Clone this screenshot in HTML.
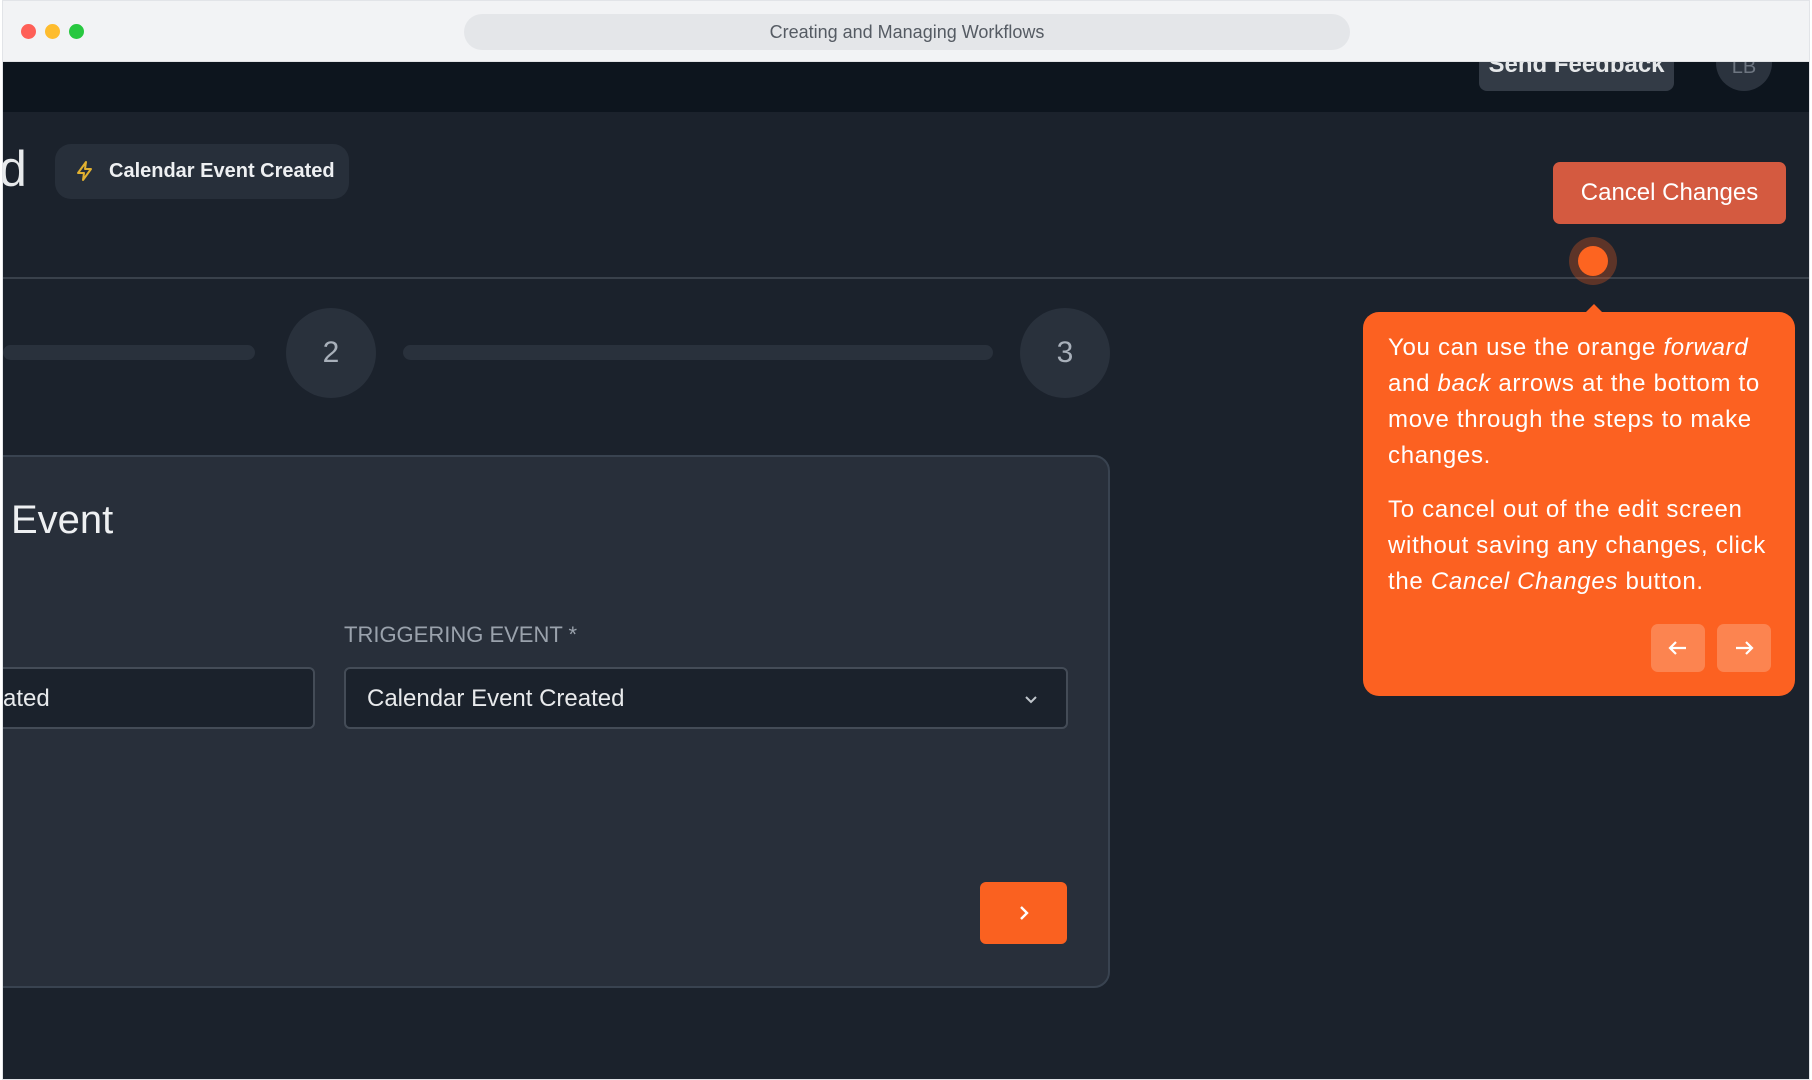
<!DOCTYPE html>
<html><head><meta charset="utf-8"><style>
*{margin:0;padding:0;box-sizing:border-box}
html,body{width:1812px;height:1080px;overflow:hidden;background:#fff;font-family:"Liberation Sans",sans-serif}
.win{position:absolute;left:2px;top:0;width:1808px;height:1080px;background:#1b222c;overflow:hidden;border:1px solid #e2e4e8}
.tb{position:absolute;left:0;top:0;width:100%;height:61px;background:#f2f3f5;border-bottom:1px solid #e0e2e5}
.dot{position:absolute;top:23px;width:15px;height:15px;border-radius:50%}
.url{position:absolute;left:461px;top:13px;width:886px;height:36px;border-radius:18px;background:#e4e6e9;text-align:center;line-height:36px;font-size:18px;color:#555b63}
.hdr{position:absolute;left:0;top:61px;width:100%;height:50px;background:#0d151e;overflow:hidden}
.sf{position:absolute;left:1476px;top:-30px;width:195px;height:59px;background:#333b46;border-radius:8px;color:#e6e8ea;font-weight:bold;font-size:24px;text-align:center;line-height:65px}
.av{position:absolute;left:1713px;top:-27px;width:56px;height:56px;border-radius:50%;background:#2b333e;color:#6d7580;text-align:center;line-height:64px;font-size:20px}
.abs{position:absolute}
</style></head><body>
<div class="win">
<div class="tb">
<div class="dot" style="left:18px;background:#fe5f57"></div>
<div class="dot" style="left:42px;background:#febc2e"></div>
<div class="dot" style="left:66px;background:#28c840"></div>
<div class="url">Creating and Managing Workflows</div>
</div>
<div class="hdr"><div class="sf">Send Feedback</div><div class="av">LB</div></div>

<div class="abs" style="left:-4px;top:138px;font-size:50px;color:#e8eaec;line-height:60px">d</div>
<div class="abs" style="left:52px;top:143px;width:294px;height:55px;border-radius:16px;background:#272f3a"></div>
<svg class="abs" style="left:70px;top:158px" width="24" height="24" viewBox="0 0 24 24" fill="none" stroke="#e0b030" stroke-width="2" stroke-linejoin="round"><path d="M13 3L5 14h6l-1 7 8-11h-6z"/></svg>
<div class="abs" style="left:106px;top:156px;font-size:20px;font-weight:bold;color:#eef0f2;line-height:28px">Calendar Event Created</div>

<div class="abs" style="left:1550px;top:161px;width:233px;height:62px;border-radius:7px;background:#d45a40;color:#fff;font-size:24px;text-align:center;line-height:62px">Cancel Changes</div>

<div class="abs" style="left:0;top:276px;width:100%;height:2px;background:#39414b"></div>

<div class="abs" style="left:0;top:344px;width:252px;height:15px;border-radius:8px;background:#29313c"></div>
<div class="abs" style="left:283px;top:307px;width:90px;height:90px;border-radius:50%;background:#29313c;color:#a8b0ba;font-size:30px;text-align:center;line-height:90px">2</div>
<div class="abs" style="left:400px;top:344px;width:590px;height:15px;border-radius:8px;background:#29313c"></div>
<div class="abs" style="left:1017px;top:307px;width:90px;height:90px;border-radius:50%;background:#29313c;color:#a8b0ba;font-size:30px;text-align:center;line-height:90px">3</div>

<div class="abs" style="left:-30px;top:454px;width:1137px;height:533px;border-radius:16px;background:#282f3a;border:2px solid #394350"></div>
<div class="abs" style="left:8px;top:494px;font-size:40px;color:#eef0f2;line-height:50px">Event</div>
<div class="abs" style="left:341px;top:620px;font-size:22px;color:#9aa2ac;line-height:28px">TRIGGERING EVENT *</div>
<div class="abs" style="left:-20px;top:666px;width:332px;height:62px;border-radius:6px;background:#1b222c;border:2px solid #444c57"></div>
<div class="abs" style="left:0;top:683px;font-size:24px;color:#e8eaec;line-height:30px">ated</div>
<div class="abs" style="left:341px;top:666px;width:724px;height:62px;border-radius:6px;background:#1b222c;border:2px solid #444c57"></div>
<div class="abs" style="left:364px;top:683px;font-size:24px;color:#e8eaec;line-height:30px">Calendar Event Created</div>
<svg class="abs" style="left:1018px;top:688px" width="20" height="20" viewBox="0 0 20 20" fill="none" stroke="#c0c6cc" stroke-width="2"><path d="M5 8l5 5 5-5"/></svg>
<div class="abs" style="left:977px;top:881px;width:87px;height:62px;border-radius:6px;background:#fa6120"></div>
<svg class="abs" style="left:1010px;top:901px" width="22" height="22" viewBox="0 0 22 22" fill="none" stroke="#fff" stroke-width="2.4"><path d="M8 5l6 6-6 6"/></svg>

<div class="abs" style="left:1566px;top:236px;width:48px;height:48px;border-radius:50%;background:rgba(250,97,32,0.3)"></div>
<div class="abs" style="left:1575px;top:245px;width:30px;height:30px;border-radius:50%;background:#fd6420"></div>

<div class="abs" style="left:1582px;top:303px;width:0;height:0;border-left:9px solid transparent;border-right:9px solid transparent;border-bottom:9px solid #fc6121"></div>
<div class="abs" style="left:1360px;top:311px;width:432px;height:384px;border-radius:16px;background:#fc6121;color:#fff;font-size:24px;line-height:36px;letter-spacing:0.7px;padding:18px 18px 0 25px">
<p>You can use the orange <i>forward</i> and <i>back</i> arrows at the bottom to move through the steps to make changes.</p>
<p style="margin-top:18px">To cancel out of the edit screen without saving any changes, click the <i>Cancel Changes</i> button.</p>
</div>
<div class="abs" style="left:1648px;top:623px;width:54px;height:48px;border-radius:7px;background:#fc8450"></div>
<div class="abs" style="left:1714px;top:623px;width:54px;height:48px;border-radius:7px;background:#fc8450"></div>
<svg class="abs" style="left:1663px;top:635px" width="24" height="24" viewBox="0 0 24 24" fill="none" stroke="#fff" stroke-width="2.2"><path d="M20 12H4M10 6l-6 6 6 6"/></svg>
<svg class="abs" style="left:1729px;top:635px" width="24" height="24" viewBox="0 0 24 24" fill="none" stroke="#fff" stroke-width="2.2"><path d="M4 12h16M14 6l6 6-6 6"/></svg>
</div>
</body></html>
